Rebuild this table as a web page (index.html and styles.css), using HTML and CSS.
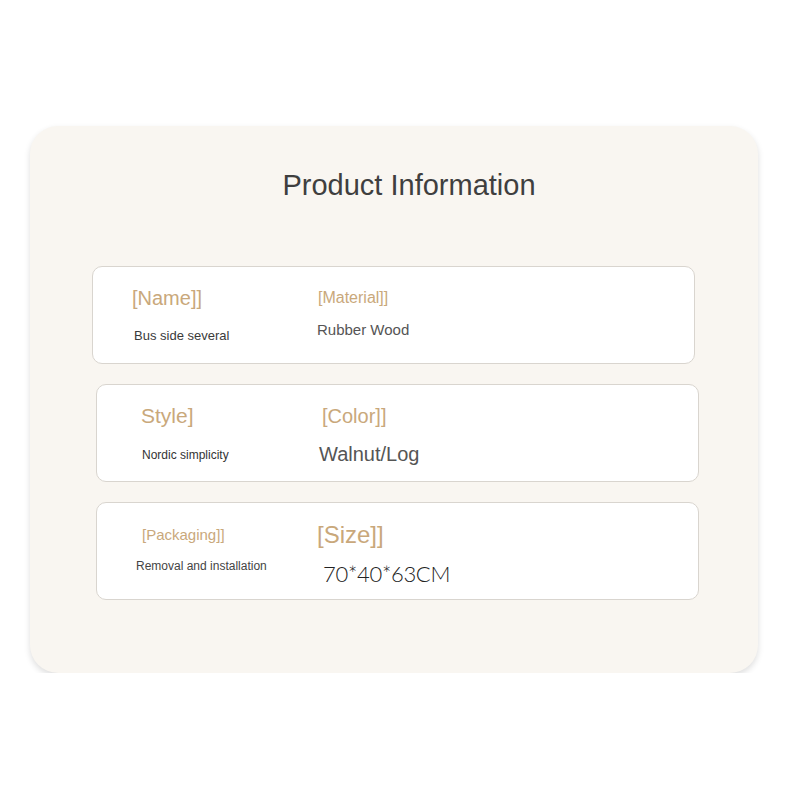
FILE: index.html
```html
<!DOCTYPE html>
<html lang="en">
<head>
    <meta charset="UTF-8">
    <meta name="viewport" content="width=device-width, initial-scale=1.0">
    <title>Product Information</title>
    <link rel="stylesheet" href="styles.css">
</head>
<body>

    <main class="panel">
        <h1 class="title">Product Information</h1>

        <div class="card card-one">
            <div class="cell">
                <p class="label name">[Name]]</p>
                <p class="value bus">Bus side several</p>
            </div>
            <div class="cell">
                <p class="label material">[Material]]</p>
                <p class="value wood">Rubber Wood</p>
            </div>
        </div>

        <div class="card card-two">
            <div class="cell">
                <p class="label style">Style]</p>
                <p class="value nordic">Nordic simplicity</p>
            </div>
            <div class="cell">
                <p class="label color">[Color]]</p>
                <p class="value walnut">Walnut/Log</p>
            </div>
        </div>

        <div class="card card-three">
            <div class="cell">
                <p class="label packaging">[Packaging]]</p>
                <p class="value removal">Removal and installation</p>
            </div>
            <div class="cell">
                <p class="label size">[Size]]</p>
                <p class="value dims">70*40*63CM</p>
            </div>
        </div>
    </main>

</body>
</html>
```

FILE: styles.css
```css
*{
    margin: 0;
    padding: 0;
    box-sizing: border-box;
}

body{
    background-color: #fff;
    font-family: "Liberation Sans", Arial, sans-serif;
    padding: 126px 0 0 30px;
}

.panel{
    width: 728px;
    height: 547px;
    background-color: #f9f6f1;
    border-radius: 28px;
    box-shadow: 0 3px 6px #00000022;
    padding-top: 42px;
}

.title{
    font-size: 29px;
    font-weight: normal;
    line-height: 34px;
    color: #3f3f3f;
    text-align: center;
    padding-left: 30px;
    margin-bottom: 64px;
}

.card{
    width: 603px;
    height: 98px;
    background-color: #fff;
    border: 1px solid #d9d5cf;
    border-radius: 10px;
    display: grid;
    margin-bottom: 20px;
}

.cell{
    display: flex;
    flex-direction: column;
    align-items: flex-start;
}

.label{
    color: #c9a87b;
    line-height: 24px;
}

.value{
    color: #444;
}

/* row one */
.card-one{
    margin-left: 62px;
    padding: 19px 0 0 39px;
    grid-template-columns: 186px 1fr;
}

.name{ font-size: 20px; }
.material{ font-size: 16px; }

.bus{
    font-size: 13px;
    line-height: 16px;
    margin: 18px 0 0 2px;
    color: #3a3a3a;
}

.wood{
    font-size: 15px;
    line-height: 18px;
    margin: 11px 0 0 -1px;
    color: #555;
}

/* row two */
.card-two{
    margin-left: 66px;
    padding: 19px 0 0 44px;
    grid-template-columns: 181px 1fr;
}

.style{ font-size: 21px; }
.color{ font-size: 20px; }

.nordic{
    font-size: 12px;
    line-height: 16px;
    margin: 19px 0 0 1px;
    color: #333;
}

.walnut{
    font-size: 20px;
    line-height: 24px;
    margin: 14px 0 0 -3px;
    color: #555;
}

/* row three */
.card-three{
    margin-left: 66px;
    padding: 17px 0 0 39px;
    grid-template-columns: 181px 1fr;
}

.packaging{
    font-size: 15px;
    margin: 3px 0 0 6px;
}

.size{
    font-size: 24px;
    line-height: 30px;
}

.removal{
    font-size: 12px;
    line-height: 16px;
    margin-top: 11px;
    color: #444;
}

.dims{
    font-family: Lato, "Liberation Sans", sans-serif;
    font-weight: 300;
    font-size: 22px;
    letter-spacing: -0.3px;
    line-height: 28px;
    margin: 10px 0 0 6px;
    color: #222;
}
```
